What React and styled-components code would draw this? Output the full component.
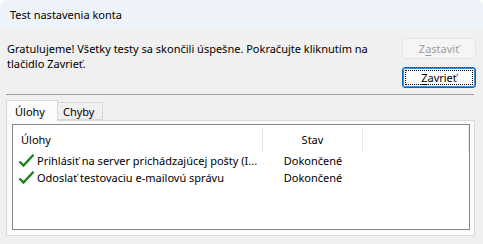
import React from 'react';
import styled, { createGlobalStyle } from 'styled-components';

const GlobalStyle = createGlobalStyle`
  html, body {
    margin: 0;
    padding: 0;
    background: #ffffff;
  }
  body {
    font-family: "Segoe UI", "Noto Sans", "Liberation Sans", sans-serif;
    font-size: 11px;
    color: #000;
  }
`;

const Window = styled.div`
  width: 483px;
  height: 244px;
  box-sizing: border-box;
  background: #f0f0f0;
  border-radius: 8px 8px 0 0;
  overflow: hidden;
  display: flex;
  flex-direction: column;
`;

const TitleBar = styled.div`
  height: 29px;
  flex: none;
  background: #eef3fa;
  display: flex;
  align-items: center;
  padding-left: 10px;
  font-size: 11px;
`;

const Body = styled.div`
  flex: 1;
  display: flex;
  flex-direction: column;
  padding: 9px 7px 0 6px;
`;

const TopRow = styled.div`
  display: flex;
  justify-content: space-between;
`;

const Message = styled.p`
  margin: 3px 0 0 1px;
  line-height: 15px;
  white-space: nowrap;
`;

const ButtonColumn = styled.div`
  display: flex;
  flex-direction: column;
  gap: 8px;
  width: 74px;
`;

const Button = styled.button`
  position: relative;
  height: 21px;
  box-sizing: border-box;
  font: inherit;
  font-size: 11px;
  padding: 0;
  border-radius: 3px;
  border: 1px solid ${p => (p.$focused ? '#0067c0' : '#e3e3e3')};
  background: ${p => (p.$disabled ? '#f5f5f5' : '#fdfdfd')};
  color: ${p => (p.$disabled ? '#9d9d9d' : '#000')};
  box-shadow: ${p => (p.$focused ? 'inset 0 0 0 1px #3e8ed8' : 'none')};

  ${p => p.$focused && `
    &::after {
      content: '';
      position: absolute;
      inset: 2px;
      border: 1px dotted #000;
    }
  `}

  u {
    text-decoration: underline;
    text-underline-offset: 2px;
  }
`;

const Separator = styled.div`
  height: 1px;
  background: #a0a0a0;
  margin: 6px 2px 0 0;
`;

const TabRow = styled.div`
  display: flex;
  align-items: flex-end;
  margin-top: 5px;
  height: 20px;
`;

const Tab = styled.div`
  box-sizing: border-box;
  height: ${p => (p.$active ? '21px' : '18px')};
  padding: ${p => (p.$active ? '1px 12px 0 8px' : '0 8px 0 5px')};
  margin-bottom: ${p => (p.$active ? '-1px' : '0')};
  background: ${p => (p.$active ? '#fbfbfb' : '#f0f0f0')};
  border: 1px solid #d9d9d9;
  border-bottom: ${p => (p.$active ? 'none' : '1px solid #d9d9d9')};
  border-left: ${p => (p.$active ? '1px solid #d9d9d9' : 'none')};
  display: flex;
  align-items: center;
  z-index: ${p => (p.$active ? 1 : 0)};
`;

const Panel = styled.div`
  box-sizing: border-box;
  height: 116px;
  margin-right: 1px;
  background: #fbfbfb;
  border: 1px solid #d9d9d9;
  padding: 3px 4px 5px 5px;
  display: flex;
`;

const ListView = styled.div`
  flex: 1;
  background: #ffffff;
  border: 1px solid #828790;
`;

const Row = styled.div`
  display: grid;
  grid-template-columns: 250px 100px 1fr;
  height: ${p => (p.$header ? '27px' : '17px')};
  align-items: center;
`;

const HeaderCell = styled.div`
  height: 25px;
  margin-top: 1px;
  display: flex;
  align-items: center;
  justify-content: ${p => (p.$center ? 'center' : 'flex-start')};
  padding-left: ${p => (p.$center ? '0' : '8px')};
  border-right: 1px solid #e5e5e5;
`;

const Cell = styled.div`
  display: flex;
  align-items: center;
  gap: 2px;
  padding-left: ${p => (p.$center ? '0' : '5px')};
  justify-content: ${p => (p.$center ? 'center' : 'flex-start')};
  white-space: nowrap;
  overflow: hidden;
  color: #000;

  svg {
    flex: none;
  }
`;

const Check = () => (
  <svg width="17" height="16" viewBox="0 0 17 16">
    <path d="M1.5 8.5 L5.5 12.5 L15.5 1.8" fill="none" stroke="#1d7f1d" strokeWidth="2.4" strokeLinejoin="miter" />
  </svg>
);

const tasks = [
  { name: 'Prihlásiť na server prichádzajúcej pošty (I...', state: 'Dokončené' },
  { name: 'Odoslať testovaciu e-mailovú správu', state: 'Dokončené' },
];

export default function App() {
  return (
    <>
      <GlobalStyle />
      <Window>
        <TitleBar>Test nastavenia konta</TitleBar>
        <Body>
          <TopRow>
            <Message>
              Gratulujeme! Všetky testy sa skončili úspešne. Pokračujte kliknutím na
              <br />
              tlačidlo Zavrieť.
            </Message>
            <ButtonColumn>
              <Button $disabled disabled>Z<u>a</u>staviť</Button>
              <Button $focused><u>Z</u>avrieť</Button>
            </ButtonColumn>
          </TopRow>
          <Separator />
          <TabRow>
            <Tab $active>Úlohy</Tab>
            <Tab>Chyby</Tab>
          </TabRow>
          <Panel>
            <ListView>
              <Row $header>
                <HeaderCell>Úlohy</HeaderCell>
                <HeaderCell $center>Stav</HeaderCell>
                <HeaderCell />
              </Row>
              {tasks.map(t => (
                <Row key={t.name}>
                  <Cell><Check />{t.name}</Cell>
                  <Cell $center>{t.state}</Cell>
                  <Cell />
                </Row>
              ))}
            </ListView>
          </Panel>
        </Body>
      </Window>
    </>
  );
}
